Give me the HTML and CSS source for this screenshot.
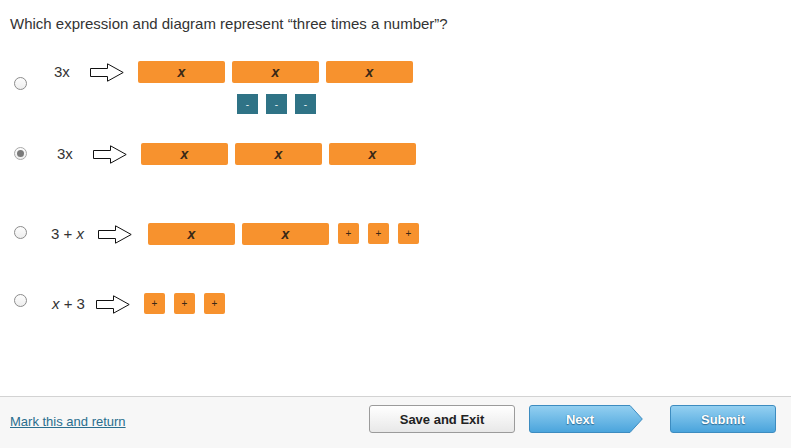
FILE: index.html
```html
<!DOCTYPE html>
<html>
<head>
<meta charset="utf-8">
<link rel="stylesheet" href="styles.css">
</head>
<body>
<div class="main">
  <p class="title">Which expression and diagram represent “three times a number”?</p>

  <div class="q q1">
    <span class="radio"></span>
    <span class="expr">3x</span>
    <svg class="arrow" width="34" height="19" viewBox="0 0 34 19"><path d="M0.5 5.5H17.5V0.8L33.2 9.5L17.5 18.2V13.5H0.5Z" fill="#fff" stroke="#111" stroke-width="1"/></svg>
    <div class="diagram">
      <div class="bars">
        <span class="bar">x</span><span class="bar">x</span><span class="bar">x</span>
      </div>
      <div class="negs">
        <span class="neg">-</span><span class="neg">-</span><span class="neg">-</span>
      </div>
    </div>
  </div>

  <div class="q q2">
    <span class="radio checked"></span>
    <span class="expr">3x</span>
    <svg class="arrow" width="34" height="19" viewBox="0 0 34 19"><path d="M0.5 5.5H17.5V0.8L33.2 9.5L17.5 18.2V13.5H0.5Z" fill="#fff" stroke="#111" stroke-width="1"/></svg>
    <div class="diagram">
      <div class="bars">
        <span class="bar">x</span><span class="bar">x</span><span class="bar">x</span>
      </div>
    </div>
  </div>

  <div class="q q3">
    <span class="radio"></span>
    <span class="expr">3 + <i>x</i></span>
    <svg class="arrow" width="34" height="19" viewBox="0 0 34 19"><path d="M0.5 5.5H17.5V0.8L33.2 9.5L17.5 18.2V13.5H0.5Z" fill="#fff" stroke="#111" stroke-width="1"/></svg>
    <div class="diagram">
      <div class="bars">
        <span class="bar">x</span><span class="bar">x</span>
        <div class="units">
          <span class="unit">+</span><span class="unit">+</span><span class="unit">+</span>
        </div>
      </div>
    </div>
  </div>

  <div class="q q4">
    <span class="radio"></span>
    <span class="expr"><i>x</i> + 3</span>
    <svg class="arrow" width="34" height="19" viewBox="0 0 34 19"><path d="M0.5 5.5H17.5V0.8L33.2 9.5L17.5 18.2V13.5H0.5Z" fill="#fff" stroke="#111" stroke-width="1"/></svg>
    <div class="diagram">
      <div class="units">
        <span class="unit">+</span><span class="unit">+</span><span class="unit">+</span>
      </div>
    </div>
  </div>
</div>

<div class="footer">
  <a class="mark" href="#">Mark this and return</a>
  <button class="btn save">Save and Exit</button>
  <div class="next">
    <svg width="114" height="28" viewBox="0 0 114 28">
      <defs>
        <linearGradient id="ng" x1="0" y1="0" x2="0" y2="1">
          <stop offset="0" stop-color="#94d0f1"/>
          <stop offset="1" stop-color="#4aa4dc"/>
        </linearGradient>
      </defs>
      <path d="M3 0.5H101L113.3 14L101 27.5H3Q0.5 27.5 0.5 25V3Q0.5 0.5 3 0.5Z" fill="url(#ng)" stroke="#3d8cc0" stroke-width="1"/>
    </svg>
    <span class="label">Next</span>
  </div>
  <button class="btn submit">Submit</button>
</div>
</body>
</html>
```
FILE: styles.css
```css
html, body {
  margin: 0;
  padding: 0;
}
body {
  width: 791px;
  height: 448px;
  overflow: hidden;
  display: flex;
  flex-direction: column;
  background: #fff;
  color: #333;
  font-family: "Liberation Sans", Arial, sans-serif;
}
.main {
  height: 396px;
  box-sizing: border-box;
  padding: 15px 0 0 10px;
}
.title {
  margin: 0;
  font-size: 15px;
  line-height: 18px;
  color: #333;
}

.q {
  display: flex;
  align-items: flex-start;
}
.q1 { margin-top: 28px; }
.q2 { margin-top: 29px; }
.q3 { margin-top: 58px; }
.q4 { margin-top: 48px; }

.radio {
  flex: none;
  width: 13px;
  height: 13px;
  box-sizing: border-box;
  margin-left: 4px;
  border: 1px solid #8c8c8c;
  border-radius: 50%;
  background: linear-gradient(#fdfdfd, #eeeeee);
  display: flex;
  align-items: center;
  justify-content: center;
}
.radio.checked {
  border-color: #a9a9a9;
}
.radio.checked::after {
  content: "";
  width: 7px;
  height: 7px;
  border-radius: 50%;
  background: #7a7a7a;
}
.q1 .radio { margin-top: 16px; }
.q2 .radio { margin-top: 4px; }
.q3 .radio { margin-top: 3px; }
.q4 .radio { margin-top: 1px; }

.expr {
  flex: none;
  font-size: 15px;
  line-height: 22px;
  color: #333;
  white-space: nowrap;
}
.q1 .expr { margin-left: 27px; width: 36px; }
.q2 .expr { margin-left: 30px; width: 36px; }
.q3 .expr { margin-left: 24px; width: 47px; }
.q4 .expr { margin-left: 25px; width: 44px; }

.arrow {
  flex: none;
  display: block;
  margin-top: 2px;
}

.diagram {
  margin-left: 14px;
  display: flex;
  flex-direction: column;
}
.q3 .diagram { margin-left: 16px; }

.bars {
  display: flex;
  gap: 7px;
}
.bar {
  width: 87px;
  height: 22px;
  border-radius: 2px;
  background: #f7922e;
  color: #3a2816;
  font-weight: bold;
  font-style: italic;
  font-size: 14px;
  display: flex;
  align-items: center;
  justify-content: center;
}
.units {
  display: flex;
  gap: 9px;
}
.q3 .units { margin-left: 2px; }
.unit {
  width: 21px;
  height: 21px;
  border-radius: 2px;
  background: #f7922e;
  color: #3a2816;
  font-size: 10px;
  display: flex;
  align-items: center;
  justify-content: center;
}
.negs {
  display: flex;
  gap: 8px;
  margin: 11px 0 0 99px;
}
.neg {
  width: 21px;
  height: 20px;
  background: #2f7386;
  color: #e8f2f4;
  font-size: 10px;
  display: flex;
  align-items: center;
  justify-content: center;
}

.footer {
  flex: 1;
  border-top: 1px solid #d3d3d3;
  background: #f7f7f7;
  display: flex;
  align-items: flex-start;
  padding: 8px 15px 0 10px;
}
.mark {
  margin-top: 3px;
  font-size: 13px;
  line-height: 28px;
  color: #2a6e8e;
  text-decoration: underline;
}
.btn {
  height: 28px;
  box-sizing: border-box;
  border-radius: 3px;
  font-family: "Liberation Sans", Arial, sans-serif;
  font-weight: bold;
  font-size: 13px;
  padding: 0;
  cursor: pointer;
}
.save {
  margin-left: auto;
  width: 146px;
  border: 1px solid #9b9b9b;
  background: linear-gradient(#ffffff, #e8e8e8);
  color: #222;
}
.next {
  position: relative;
  margin-left: 14px;
  width: 114px;
  height: 28px;
}
.next svg {
  position: absolute;
  left: 0;
  top: 0;
}
.next .label {
  position: relative;
  display: block;
  width: 102px;
  text-align: center;
  line-height: 29px;
  font-weight: bold;
  font-size: 13px;
  color: #fff;
  text-shadow: 0 0 1px #2f6f99, 0 1px 1px #2f6f99;
}
.submit {
  margin-left: 27px;
  width: 106px;
  border: 1px solid #3d8cc0;
  background: linear-gradient(#94d0f1, #4aa4dc);
  color: #fff;
  text-shadow: 0 0 1px #2f6f99, 0 1px 1px #2f6f99;
}
```
